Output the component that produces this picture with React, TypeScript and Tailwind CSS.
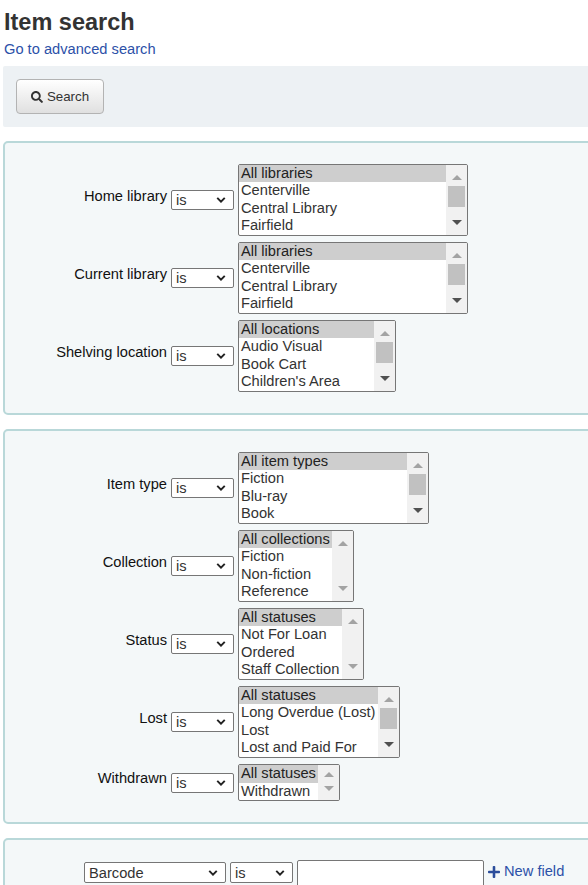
import React from "react";
import { FaSearch, FaPlus } from "react-icons/fa";

type Row = { label: string; width: string; options: string[]; thumb: boolean };

const group1: Row[] = [
  { label: "Home library", width: "w-[230px]", options: ["All libraries", "Centerville", "Central Library", "Fairfield"], thumb: true },
  { label: "Current library", width: "w-[230px]", options: ["All libraries", "Centerville", "Central Library", "Fairfield"], thumb: true },
  { label: "Shelving location", width: "w-[158px]", options: ["All locations", "Audio Visual", "Book Cart", "Children's Area"], thumb: true },
];

const group2: Row[] = [
  { label: "Item type", width: "w-[191px]", options: ["All item types", "Fiction", "Blu-ray", "Book"], thumb: true },
  { label: "Collection", width: "w-[116px]", options: ["All collections", "Fiction", "Non-fiction", "Reference"], thumb: false },
  { label: "Status", width: "w-[126px]", options: ["All statuses", "Not For Loan", "Ordered", "Staff Collection"], thumb: false },
  { label: "Lost", width: "w-[162px]", options: ["All statuses", "Long Overdue (Lost)", "Lost", "Lost and Paid For"], thumb: true },
  { label: "Withdrawn", width: "w-[102px]", options: ["All statuses", "Withdrawn"], thumb: false },
];

function Chevron() {
  return (
    <svg viewBox="0 0 12 8" className="pointer-events-none absolute right-[8px] top-1/2 h-[6px] w-[10px] -translate-y-1/2" aria-hidden="true">
      <path d="M1 1.2 L6 6.2 L11 1.2" fill="none" stroke="#222" strokeWidth="2.6" />
    </svg>
  );
}

function NativeSelect({ value, width, height = "h-[20px]" }: { value: string; width: string; height?: string }) {
  return (
    <div className={`relative shrink-0 ${height} ${width}`}>
      <select
        defaultValue={value}
        className="block h-full w-full appearance-none rounded-[2px] border border-[#767676] bg-white pl-[4px] text-[14.67px] leading-[18px] text-[#333]"
      >
        <option>{value}</option>
      </select>
      <Chevron />
    </div>
  );
}

function Arrow({ up, dark }: { up: boolean; dark: boolean }) {
  return (
    <svg viewBox="0 0 10 5" className="h-[5px] w-[10px]" aria-hidden="true">
      <path d={up ? "M5 0 L10 5 L0 5 Z" : "M0 0 L10 0 L5 5 Z"} fill={dark ? "#505050" : "#a3a3a3"} />
    </svg>
  );
}

function ListBox({ row }: { row: Row }) {
  const short = row.options.length < 3;
  return (
    <div role="listbox" className={`flex shrink-0 overflow-hidden rounded-[2px] border border-[#767676] bg-white ${row.width}`}>
      <div className={`min-w-0 flex-1 ${short ? "h-[35px]" : "h-[70px]"}`}>
        {row.options.map((o, i) => (
          <div
            key={o}
            role="option"
            className={`overflow-hidden whitespace-nowrap pl-[2px] text-[14.67px] ${short ? "h-[17.5px] leading-[17.5px]" : "h-[17.4px] leading-[17.4px]"} ${i === 0 ? "bg-[#cecece] text-[#222]" : "text-[#333]"}`}
          >
            {o}
          </div>
        ))}
      </div>
      <div className={`flex w-[21px] shrink-0 flex-col items-center justify-between bg-[#f1f1f1] ${short ? "pt-[7px] pb-[9px]" : "py-[10px]"}`}>
        <div className="flex flex-col items-center">
          <Arrow up dark={false} />
          {row.thumb && <div className="mt-[6px] h-[21px] w-[17px] bg-[#c1c1c1]" />}
        </div>
        <Arrow up={false} dark={row.thumb} />
      </div>
    </div>
  );
}

function SearchRow({ row }: { row: Row }) {
  return (
    <div className="flex items-center">
      <label className="w-[162px] pb-[8px] text-right text-[14.67px] leading-[17px] text-[#111]">{row.label}</label>
      <div className="ml-[4px]">
        <NativeSelect value="is" width="w-[63px]" />
      </div>
      <div className="ml-[4px]">
        <ListBox row={row} />
      </div>
    </div>
  );
}

function Fieldset({ children }: { children: React.ReactNode }) {
  return (
    <div className="w-[600px] rounded-[5px] border-2 border-[#b9d8d9] bg-[#f4f8f9] pt-[21px] pb-[21px]">
      <div className="flex flex-col gap-[6px]">{children}</div>
    </div>
  );
}

export default function App() {
  return (
    <div className="h-[885px] w-[588px] overflow-hidden bg-white font-['Liberation_Sans',Arial,sans-serif]">
      <h1 className="pt-[8px] pl-[4px] text-[23.5px] leading-[28px] font-bold text-[#333]">Item search</h1>
      <a href="#" className="mt-[5px] block pl-[4px] text-[14.67px] leading-[17px] text-[#2c51a8]">Go to advanced search</a>
      <div className="mt-[8px] ml-[3px] w-[600px] rounded-[2px] bg-[#edf1f4] py-[13px] pl-[13px]">
        <button className="flex h-[35px] w-[88px] items-center justify-center gap-[4px] rounded-[4px] border border-[#b3b3b3] bg-gradient-to-b from-white to-[#e0e0e0] text-[13.33px] text-[#333]">
          <FaSearch className="h-[12px] w-[12px] text-[#333]" />
          Search
        </button>
      </div>
      <div className="mt-[14px] ml-[3px] flex flex-col gap-[14px]">
        <Fieldset>{group1.map((r) => <SearchRow key={r.label} row={r} />)}</Fieldset>
        <Fieldset>{group2.map((r) => <SearchRow key={r.label} row={r} />)}</Fieldset>
        <div className="w-[600px] rounded-[5px] border-2 border-[#b9d8d9] bg-[#f4f8f9] pt-[20px] pb-[20px]">
          <div className="flex items-start pl-[79px]">
            <div className="mt-[2px]"><NativeSelect value="Barcode" width="w-[142px]" height="h-[21px]" /></div>
            <div className="mt-[2px] ml-[4px]"><NativeSelect value="is" width="w-[63px]" height="h-[21px]" /></div>
            <input type="text" className="ml-[4px] h-[30px] w-[187px] rounded-[2px] border border-[#767676] bg-white" />
            <a href="#" className="ml-[4px] flex items-center gap-[4px] pt-[3px] text-[14.67px] leading-[17px] text-[#2c51a8]">
              <FaPlus className="h-[14px] w-[12px] text-[#2b4d9b]" />
              New field
            </a>
          </div>
        </div>
      </div>
    </div>
  );
}
